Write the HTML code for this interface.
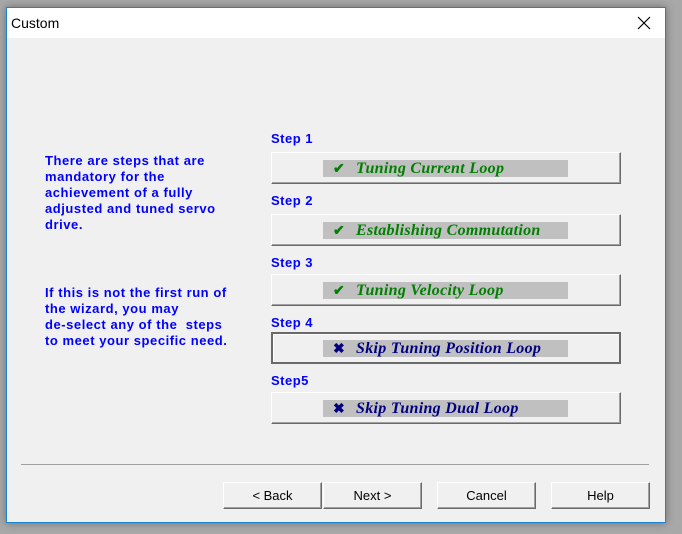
<!DOCTYPE html>
<html><head><meta charset="utf-8"><style>
body{margin:0;width:682px;height:534px;background:#a8a8a8;position:relative;overflow:hidden;font-family:"Liberation Sans",sans-serif}
.win{position:absolute;left:6px;top:7px;width:658px;height:514px;border:1px solid #1883d7;background:#f0f0f0;box-shadow:0 0 8px rgba(0,0,0,.35)}
.title{position:absolute;left:0;top:0;width:658px;height:30px;background:#fff}
.title span{position:absolute;left:4px;top:7px;font-size:14px;color:#000}
.abs{position:absolute}
.lt{position:absolute;left:45px;color:#0000ff;font-weight:bold;font-size:13px;line-height:16px;white-space:pre;letter-spacing:0.55px}
.lab{position:absolute;left:271px;color:#0000ff;font-weight:bold;font-size:13px;letter-spacing:0.5px}
.sb{position:absolute;left:271px;width:350px;height:32px;box-sizing:border-box;background:#f0f0f0;border:1px solid;border-color:#fff #6a6a6a #6a6a6a #fff;box-shadow:inset -1px -1px 0 #a0a0a0}
.sb.p{border:2px solid;border-color:#6a6a6a;box-shadow:inset 1px 1px 0 #fff}
.bar{position:absolute;left:51px;top:7px;width:245px;height:17px;background:#c0c0c0;font-family:"Liberation Serif",serif;font-style:italic;font-weight:bold;font-size:16px;line-height:17px}
.p .bar{left:50px;top:6px}
.bar span{position:absolute;left:33px;top:0px;white-space:nowrap;letter-spacing:0.3px}
.g{color:#008000}.b{color:#000080}
.ic{position:absolute;left:10px;top:1px;font-style:normal;font-size:14px}
.btn{position:absolute;top:482px;height:27px;width:99px;box-sizing:border-box;border:1px solid;border-color:#fff #6a6a6a #6a6a6a #fff;box-shadow:inset -1px -1px 0 #a0a0a0;font-size:13px;text-align:center;line-height:25px;color:#000;background:#f0f0f0}
</style></head><body>
<div class="win">
<div class="title"><span>Custom</span>
<svg class="abs" style="left:630px;top:8px" width="14" height="14"><path d="M1 1L13 13M13 1L1 13" stroke="#000" stroke-width="1.2"/></svg></div>
</div>
<div class="lt" style="top:153px">There are steps that are
mandatory for the
achievement of a fully
adjusted and tuned servo
drive.</div>
<div class="lt" style="top:285px">If this is not the first run of
the wizard, you may
de-select any of the  steps
to meet your specific need.</div>

<div class="lab" style="top:131px">Step 1</div>
<div class="sb" style="top:152px"><div class="bar g"><i class="ic">✔</i><span>Tuning Current Loop</span></div></div>
<div class="lab" style="top:193px">Step 2</div>
<div class="sb" style="top:214px"><div class="bar g"><i class="ic">✔</i><span>Establishing Commutation</span></div></div>
<div class="lab" style="top:255px">Step 3</div>
<div class="sb" style="top:274px"><div class="bar g"><i class="ic">✔</i><span>Tuning Velocity Loop</span></div></div>
<div class="lab" style="top:315px">Step 4</div>
<div class="sb p" style="top:332px"><div class="bar b"><i class="ic">✖</i><span>Skip Tuning Position Loop</span></div></div>
<div class="lab" style="top:373px">Step5</div>
<div class="sb" style="top:392px"><div class="bar b"><i class="ic">✖</i><span>Skip Tuning Dual Loop</span></div></div>

<div class="abs" style="left:21px;top:464px;width:628px;height:1px;background:#a0a0a0"></div>
<div class="btn" style="left:223px">&lt; Back</div>
<div class="btn" style="left:323px">Next &gt;</div>
<div class="btn" style="left:437px">Cancel</div>
<div class="btn" style="left:551px">Help</div>
</body></html>
